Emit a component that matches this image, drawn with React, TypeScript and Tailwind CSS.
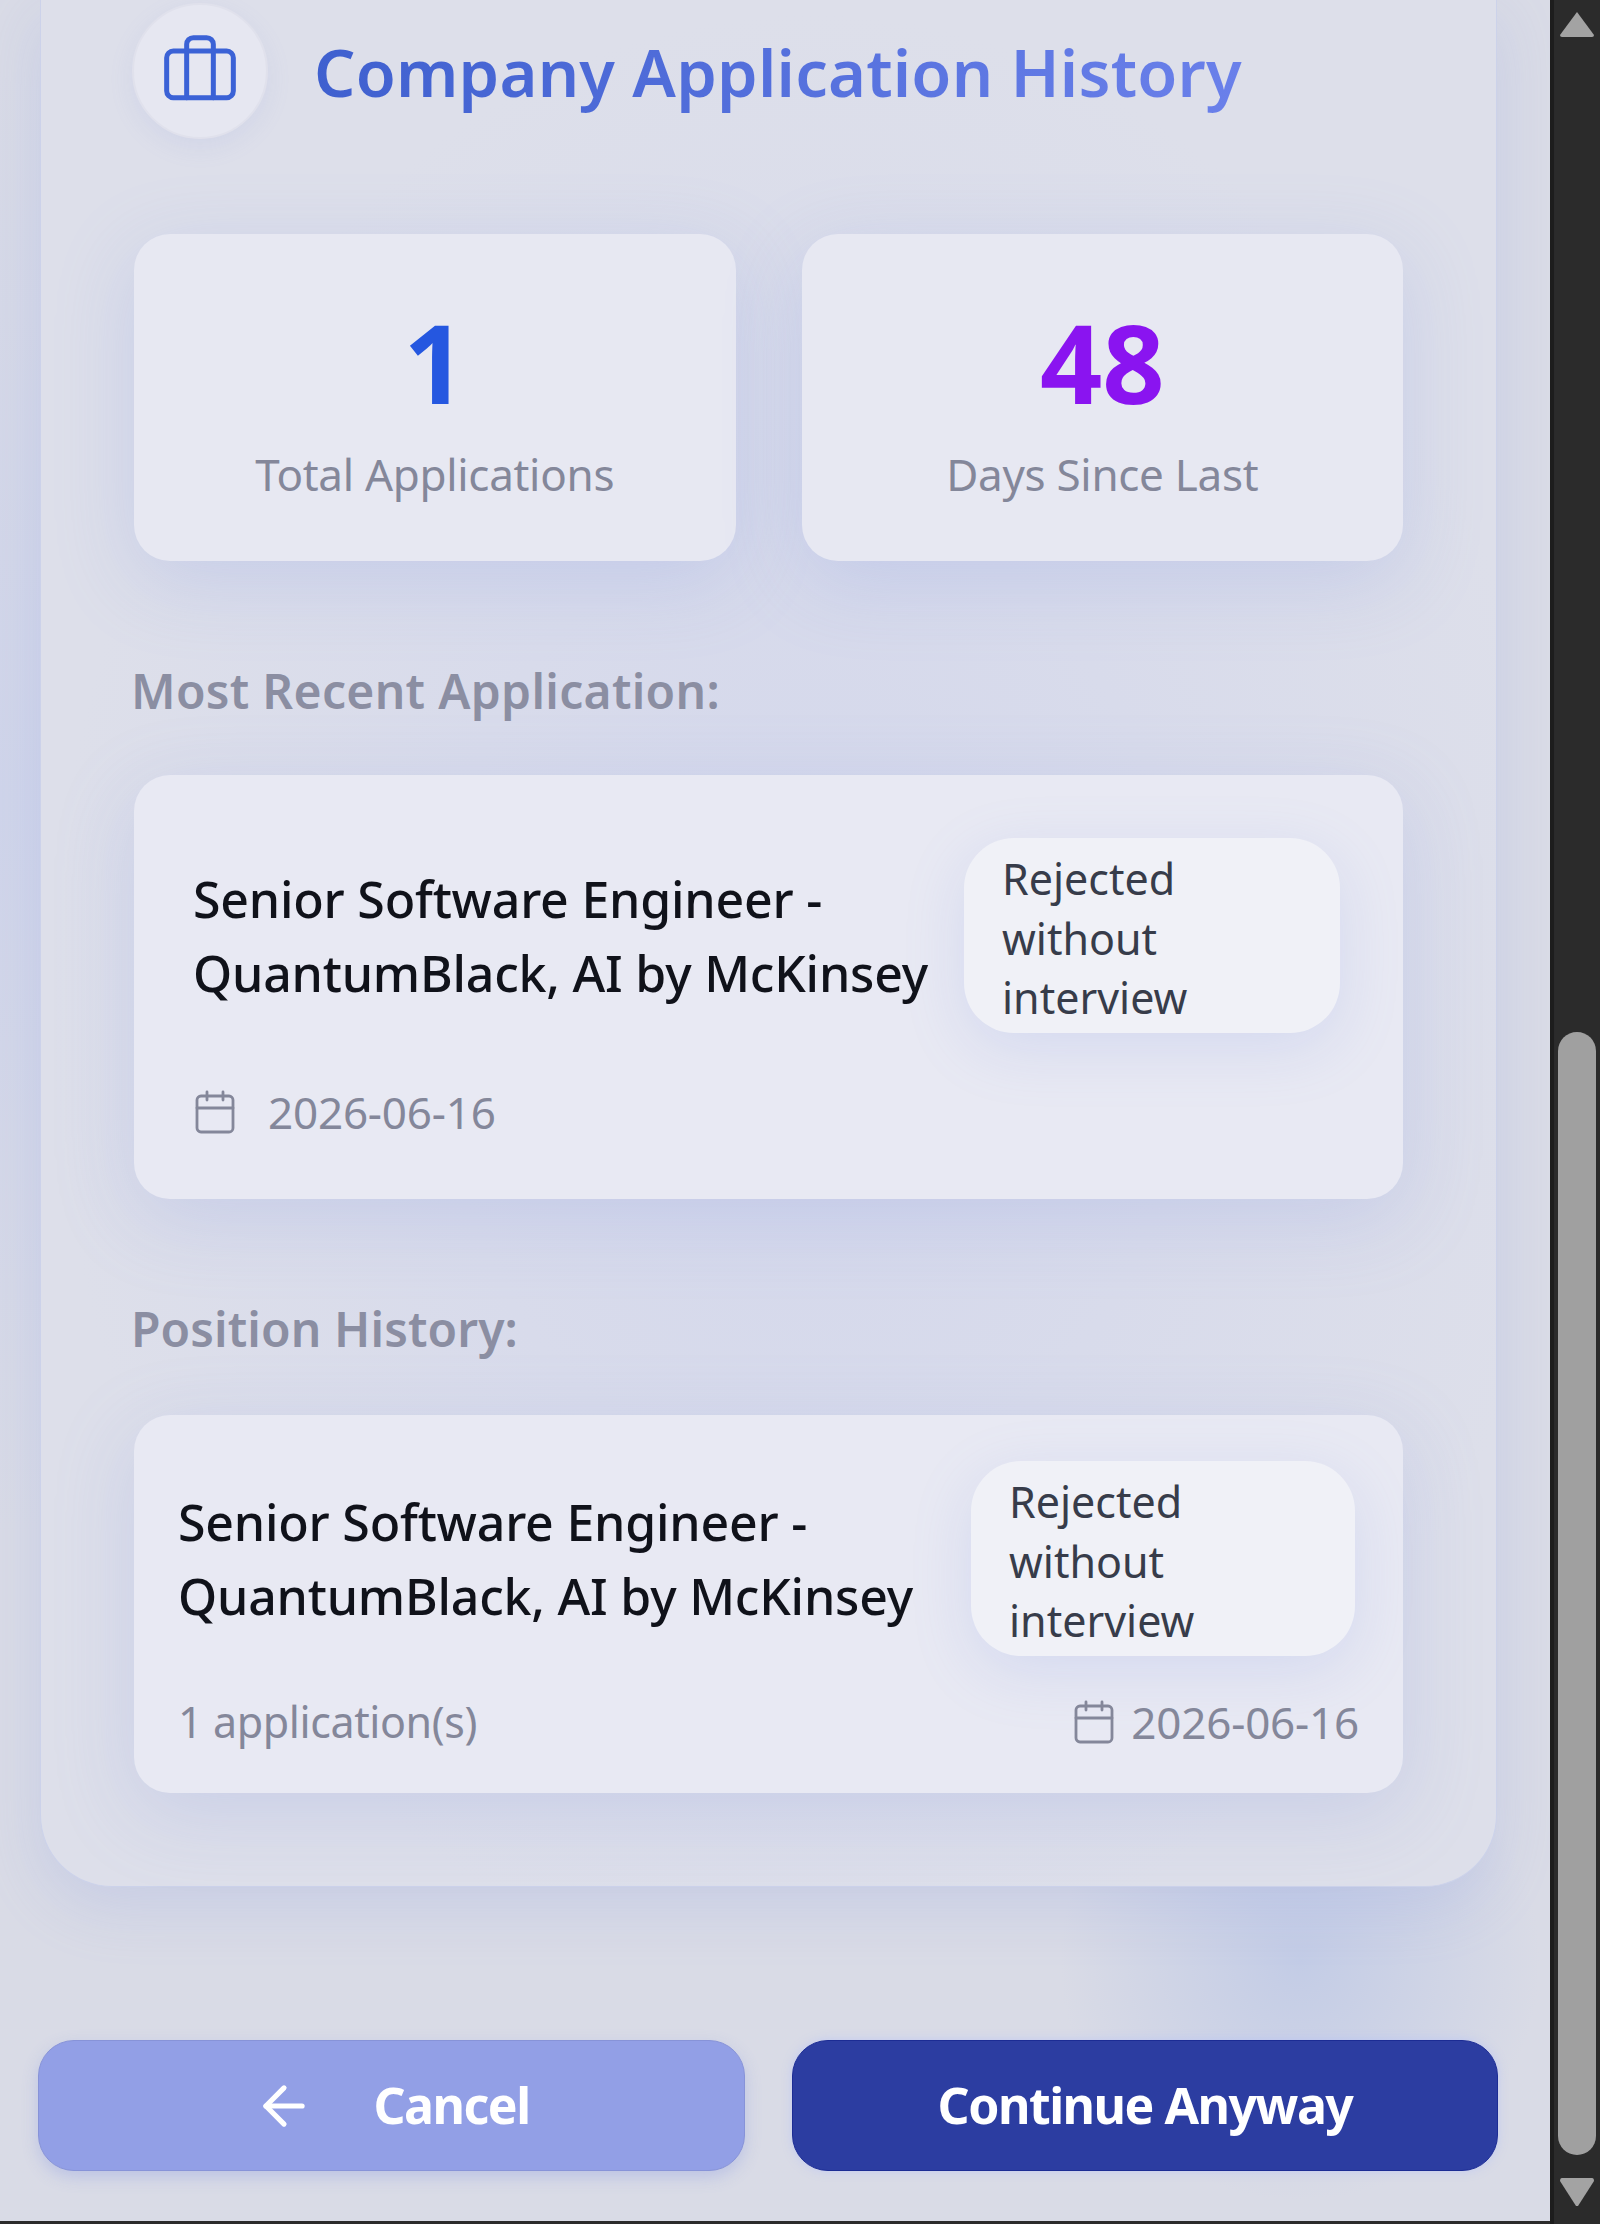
import { ArrowLeft, Briefcase, Calendar } from "lucide-react";

const font = "font-['Noto_Sans','Open_Sans',sans-serif]";

function Stat({ value, label, color }: { value: string; label: string; color: string }) {
  return (
    <div className="flex h-[327px] flex-col items-center rounded-[36px] bg-[#e7e8f2] shadow-[0_20px_80px_rgba(130,150,225,0.24)]">
      <div className={`mt-[68px] h-[120px] text-[109px] leading-[120px] font-bold ${color}`}>{value}</div>
      <div className="mt-[22px] text-[44px] leading-[60px] tracking-[-0.3px] text-[#84879a]">{label}</div>
    </div>
  );
}

function Status({ className }: { className: string }) {
  return (
    <div className={`h-[195px] shrink-0 rounded-[50px] bg-[#f0f1f7] pl-[38px] pt-[11px] text-[43px] leading-[59.5px] text-[#373c4a] shadow-[0_16px_60px_rgba(130,150,225,0.18)] ${className}`}>
      Rejected
      <br />
      without
      <br />
      interview
    </div>
  );
}

function JobTitle() {
  return (
    <div className="text-[50px] leading-[74px] font-medium tracking-[-0.2px] text-[#10121a]">
      Senior Software Engineer -
      <br />
      QuantumBlack, AI by McKinsey
    </div>
  );
}

function DateText({ className }: { className: string }) {
  return (
    <div className={`flex h-[60px] items-center text-[#84879a] ${className}`}>
      <Calendar size={48} strokeWidth={1.4} className="shrink-0" />
      <span className="text-[44px] tracking-[-0.2px]">2026-06-16</span>
    </div>
  );
}

export default function App() {
  return (
    <div className={`flex h-[2224px] w-[1600px] overflow-hidden bg-[#2b2b2b] ${font}`}>
      <div className="flex w-[1550px] flex-col">
        <main className="h-[2221px] bg-[#d9dbe6] bg-[radial-gradient(circle_at_1300px_1960px,#c3cce6_0,rgba(195,204,230,0)_240px),radial-gradient(ellipse_at_0px_800px,#d0d5ea_0,rgba(208,213,234,0)_800px)]">
          <section className="ml-[40px] w-[1457px] rounded-b-[72px] border-x border-b border-[#ccd2ea] bg-[#dddfea] bg-[radial-gradient(ellipse_at_770px_1000px,#d3d7ec_0,rgba(211,215,236,0)_760px)] px-[93px] pb-[93px] pt-[4px] shadow-[0_20px_60px_rgba(130,150,225,0.2)]">
            <header className="flex h-[134px] items-center gap-[46px]">
              <div className="-ml-[2px] flex h-[136px] w-[136px] shrink-0 items-center justify-center rounded-full border-2 border-[#e0e1ec] bg-[#e6e7f1] text-[#3b62d6] shadow-[0_8px_24px_rgba(130,150,225,0.12)]">
                <Briefcase size={80} strokeWidth={1.5} />
              </div>
              <h1 className="mt-[3px] bg-gradient-to-r from-[#3f60cf] to-[#6a80ea] bg-clip-text text-[65px] font-semibold tracking-[0.2px] text-transparent">
                Company Application History
              </h1>
            </header>

            <div className="mt-[96px] grid grid-cols-2 gap-[66px]">
              <Stat value="1" label="Total Applications" color="text-[#2557e0]" />
              <Stat value="48" label="Days Since Last" color="text-[#8a14f0]" />
            </div>

            <h2 className="-ml-[3px] mt-[100px] text-[48px] leading-[60px] font-semibold tracking-[0.3px] text-[#8b8ea2]">
              Most Recent Application:
            </h2>
            <div className="mt-[54px] h-[424px] rounded-[36px] bg-[#e8e9f3] pl-[59px] pr-[63px] pt-[63px] shadow-[0_20px_80px_rgba(130,150,225,0.22)]">
              <div className="flex items-center justify-between">
                <JobTitle />
                <Status className="w-[376px]" />
              </div>
              <DateText className="mt-[49px] -ml-[2px] gap-[29px]" />
            </div>

            <h2 className="-ml-[3px] mt-[100px] text-[48px] leading-[60px] font-semibold tracking-[0.1px] text-[#8b8ea2]">
              Position History:
            </h2>
            <div className="mt-[56px] h-[378px] rounded-[36px] bg-[#e8e9f3] pl-[44px] pr-[44px] pt-[46px] shadow-[0_20px_80px_rgba(130,150,225,0.22)]">
              <div className="flex items-center justify-between">
                <JobTitle />
                <Status className="mr-[4px] w-[384px]" />
              </div>
              <div className="mt-[36px] flex items-center justify-between">
                <span className="text-[43px] leading-[60px] tracking-[-0.4px] text-[#84879a]">1 application(s)</span>
                <DateText className="gap-[13px]" />
              </div>
            </div>
          </section>

          <div className="mt-[153px] ml-[38px] flex w-[1460px] gap-[47px] text-[50px] font-bold tracking-[-1.5px] text-white">
            <button className="flex h-[131px] w-[707px] items-center justify-center gap-[58px] rounded-[36px] border border-[#8793d8] bg-[#929fe6] shadow-[0_6px_16px_rgba(120,140,225,0.3)]">
              <ArrowLeft size={62} strokeWidth={2} />
              Cancel
            </button>
            <button className="flex h-[131px] w-[706px] items-center justify-center rounded-[36px] border border-[#1c2c94] bg-[#2c3da1] shadow-[0_0_10px_rgba(170,185,255,0.5)]">
              Continue Anyway
            </button>
          </div>
        </main>
      </div>

      <aside className="flex w-[50px] flex-col items-center border-l-4 border-[#1d1d1d] pt-[11px]">
        <svg width="36" height="27" viewBox="0 0 36 27" className="shrink-0 text-[#a3a3a3]">
          <path d="M18 1 L35 24 Q35 26 33 26 H3 Q1 26 1 24 Z" fill="currentColor" />
        </svg>
        <div className="mt-[994px] h-[1123px] w-[38px] shrink-0 rounded-full bg-[#a0a0a0]" />
        <svg width="36" height="30" viewBox="0 0 36 30" className="mt-[22px] shrink-0 text-[#a3a3a3]">
          <path d="M3 1 H33 Q35 1 35 4 L19 29 H17 L1 4 Q1 1 3 1 Z" fill="currentColor" />
        </svg>
      </aside>
    </div>
  );
}
